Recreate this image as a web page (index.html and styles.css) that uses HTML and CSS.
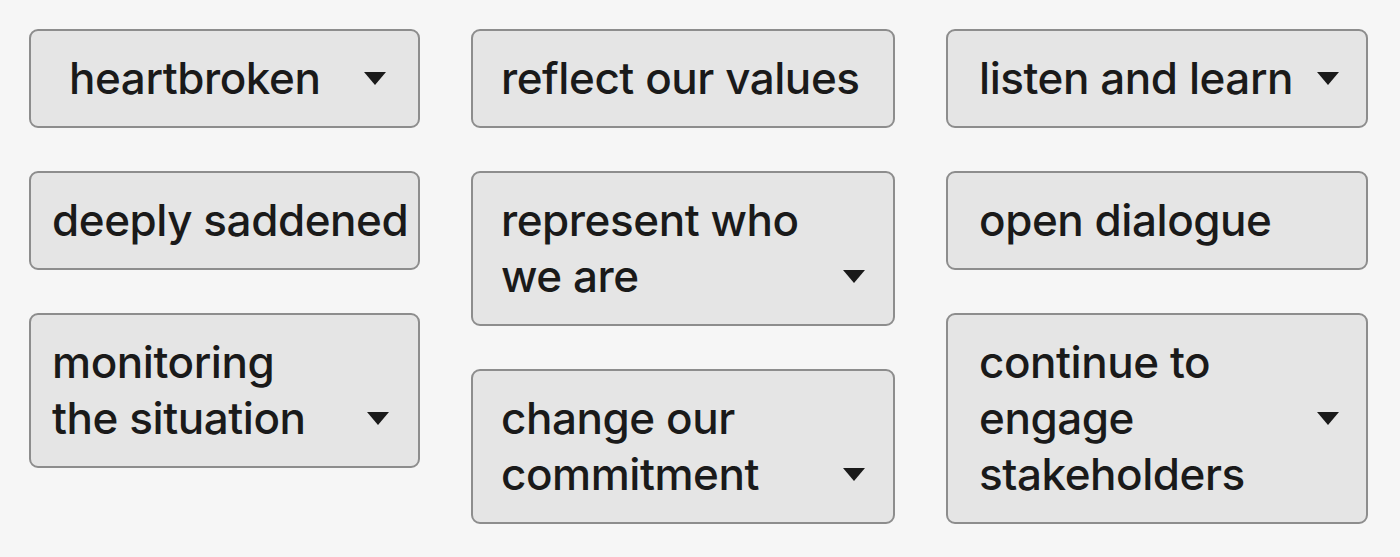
FILE: index.html
```html
<!DOCTYPE html>
<html lang="en">
<head>
<meta charset="utf-8">
<title>Phrases</title>
<link rel="stylesheet" href="styles.css">
</head>
<body>
<main class="board">
  <section class="col col-1">
    <div class="chip pad-wide"><span class="label">heartbroken</span><span class="caret-line"><span class="caret"></span></span></div>
    <div class="chip pad-a"><span class="label">deeply saddened</span></div>
    <div class="chip pad-a end"><span class="label">monitoring<br>the situation</span><span class="caret-line"><span class="caret"></span></span></div>
  </section>
  <section class="col col-2">
    <div class="chip pad-b"><span class="label">reflect our values</span></div>
    <div class="chip pad-b end"><span class="label">represent who<br>we are</span><span class="caret-line"><span class="caret"></span></span></div>
    <div class="chip pad-b end"><span class="label">change our<br>commitment</span><span class="caret-line"><span class="caret"></span></span></div>
  </section>
  <section class="col col-3">
    <div class="chip pad-c"><span class="label">listen and learn</span><span class="caret-line"><span class="caret"></span></span></div>
    <div class="chip pad-c"><span class="label">open dialogue</span></div>
    <div class="chip pad-c"><span class="label">continue to<br>engage<br>stakeholders</span><span class="caret-line"><span class="caret"></span></span></div>
  </section>
</main>
</body>
</html>
```

FILE: styles.css
```css
html, body {
  margin: 0;
  padding: 0;
  background: #f6f6f6;
}

body {
  font-family: Inter, "Liberation Sans", sans-serif;
  color: #1a1a1a;
}

.board {
  display: flex;
  align-items: flex-start;
  gap: 51px;
  padding: 29px 0 0 29px;
}

.col {
  display: flex;
  flex-direction: column;
  gap: 43px;
}

.col-1 { width: 391px; }
.col-2 { width: 424px; }
.col-3 { width: 422px; }

.chip {
  box-sizing: border-box;
  display: flex;
  align-items: center;
  justify-content: space-between;
  border: 2px solid #8d8d8d;
  border-radius: 9px;
  background: #e5e5e5;
  padding: 19px 29px 20px 21px;
  font-size: 44px;
  font-weight: 500;
  line-height: 56px;
  letter-spacing: -0.45px;
  white-space: nowrap;
}

.chip.end { align-items: flex-end; }

.pad-wide { padding-left: 38px; padding-right: 32px; }
.pad-a { padding-left: 21px; }
.pad-b { padding-left: 28px; padding-right: 28px; }
.pad-c { padding-left: 31px; padding-right: 27px; }

.label { display: block; }

.caret-line {
  display: flex;
  align-items: center;
  height: 56px;
}

.caret {
  width: 0;
  height: 0;
  border-left: 11px solid transparent;
  border-right: 11px solid transparent;
  border-top: 13px solid #1a1a1a;
}
```
